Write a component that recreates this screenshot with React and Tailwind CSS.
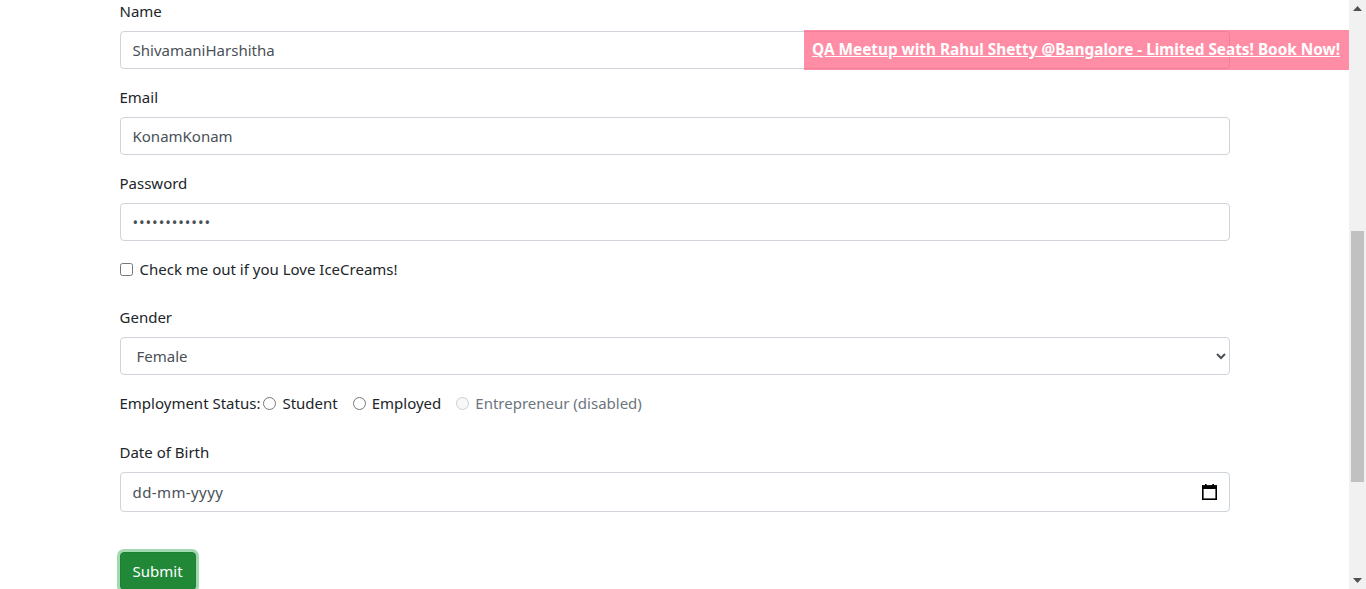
import React from 'react';

function Label({ children }) {
    return <label className="block mb-2 leading-6 text-[#212529]">{children}</label>;
}

function TextInput({ type = "text", value, className = "" }) {
    return (
        <input
            type={type}
            defaultValue={value}
            className={`block w-full h-[38px] px-3 border border-[#ced4da] rounded-[4px] bg-white text-[#495057] outline-none ${className}`}
        />
    );
}

function CalendarIcon() {
    return (
        <svg width="15" height="16" viewBox="0 0 15 16" className="shrink-0">
            <rect x="3" y="0" width="1.6" height="3" fill="#000" />
            <rect x="10.4" y="0" width="1.6" height="3" fill="#000" />
            <rect x="0.8" y="2" width="13.4" height="13.2" fill="none" stroke="#000" strokeWidth="1.6" />
            <rect x="0" y="1.5" width="15" height="3.5" fill="#000" />
        </svg>
    );
}

function Scrollbar() {
    return (
        <div className="w-[17px] shrink-0 bg-[#f1f1f1] flex flex-col items-center">
            <div className="h-[17px] flex items-center justify-center">
                <svg width="9" height="5" viewBox="0 0 9 5"><path d="M0 5 L4.5 0 L9 5 Z" fill="#505050" /></svg>
            </div>
            <div className="mt-[214px] w-[13px] h-[251px] bg-[#c1c1c1]" />
            <div className="mt-auto h-[17px] flex items-center justify-center">
                <svg width="9" height="5" viewBox="0 0 9 5"><path d="M0 0 L9 0 L4.5 5 Z" fill="#505050" /></svg>
            </div>
        </div>
    );
}

export default function App() {
    return (
        <div className="relative flex h-[589px] overflow-hidden bg-white text-[15px] text-[#212529] font-['Noto_Sans','Open_Sans',sans-serif]">
            <div className="flex-1 min-w-0">
                <form className="mx-auto max-w-[1140px] px-[15px] -mt-px">
                    {/* --- text fields --- */}
                    <div className="mb-4">
                        <Label>Name</Label>
                        <TextInput value="ShivamaniHarshitha" />
                    </div>
                    <div className="mb-4">
                        <Label>Email</Label>
                        <TextInput value="KonamKonam" />
                    </div>
                    <div className="mb-4">
                        <Label>Password</Label>
                        <TextInput type="password" value="harshitha123" className="tracking-[0.9px]" />
                    </div>

                    {/* --- checkbox --- */}
                    <div className="mb-6 flex items-center h-6">
                        <input type="checkbox" className="size-[13px] m-0 mr-[7px]" />
                        <span>Check me out if you Love IceCreams!</span>
                    </div>

                    {/* --- gender select --- */}
                    <div className="mb-4">
                        <Label>Gender</Label>
                        <select className="block w-full h-[38px] px-3 border border-[#ced4da] rounded-[4px] bg-white text-[#495057] outline-none">
                            <option>Female</option>
                            <option>Male</option>
                        </select>
                    </div>

                    {/* --- employment radios --- */}
                    <div className="mb-[25px] flex items-center h-6">
                        <span className="mr-[3px]">Employment Status:</span>
                        <label className="flex items-center mr-[15px]">
                            <input type="radio" name="emp" className="size-[13px] m-0 mr-[6px]" />
                            Student
                        </label>
                        <label className="flex items-center mr-[15px]">
                            <input type="radio" name="emp" className="size-[13px] m-0 mr-[6px]" />
                            Employed
                        </label>
                        <label className="flex items-center text-[#6c757d]">
                            <input type="radio" name="emp" disabled className="size-[13px] m-0 mr-[6px]" />
                            Entrepreneur (disabled)
                        </label>
                    </div>

                    {/* --- date of birth --- */}
                    <div className="mb-[40px]">
                        <Label>Date of Birth</Label>
                        <div className="flex items-center justify-between h-[40px] px-3 border border-[#ced4da] rounded-[4px] bg-white text-[#495057]">
                            <span className="tracking-[0.4px]">dd-mm-yyyy</span>
                            <CalendarIcon />
                        </div>
                    </div>

                    <button type="button" className="h-[38px] px-3 rounded-[4px] bg-[#218838] border border-[#1e7e34] text-white shadow-[0_0_0_3px_rgba(72,180,97,0.5)]">
                        Submit
                    </button>
                </form>
            </div>

            <Scrollbar />

            {/* promo banner pinned over the page */}
            <a href="#" className="absolute top-[30px] right-[17px] h-[40px] flex items-center pl-2 pr-[9px] bg-[#ff5c7f]/70 text-white text-[15.35px] font-bold underline">
                QA Meetup with Rahul Shetty @Bangalore - Limited Seats! Book Now!
            </a>
        </div>
    );
}
